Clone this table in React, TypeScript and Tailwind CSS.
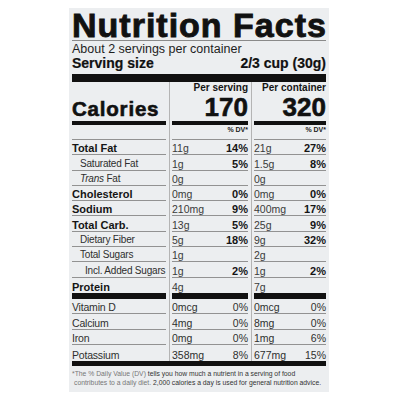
import React from "react";

type Row = {
  label: React.ReactNode;
  bold?: boolean;
  indent?: 0 | 1 | 2;
  s: string;
  sp?: string;
  c: string;
  cp?: string;
};

const rows: Row[] = [
  { label: "Total Fat", bold: true, s: "11g", sp: "14%", c: "21g", cp: "27%" },
  { label: "Saturated Fat", indent: 1, s: "1g", sp: "5%", c: "1.5g", cp: "8%" },
  {
    label: (
      <span>
        <span className="italic">Trans</span>
        {" Fat"}
      </span>
    ),
    indent: 1,
    s: "0g",
    c: "0g",
  },
  { label: "Cholesterol", bold: true, s: "0mg", sp: "0%", c: "0mg", cp: "0%" },
  { label: "Sodium", bold: true, s: "210mg", sp: "9%", c: "400mg", cp: "17%" },
  { label: "Total Carb.", bold: true, s: "13g", sp: "5%", c: "25g", cp: "9%" },
  { label: "Dietary Fiber", indent: 1, s: "5g", sp: "18%", c: "9g", cp: "32%" },
  { label: "Total Sugars", indent: 1, s: "1g", c: "2g" },
  { label: "Incl. Added Sugars", indent: 2, s: "1g", sp: "2%", c: "1g", cp: "2%" },
  { label: "Protein", bold: true, s: "4g", c: "7g" },
];

const vits = [
  ["Vitamin D", "0mcg", "0%", "0mcg", "0%"],
  ["Calcium", "4mg", "0%", "8mg", "0%"],
  ["Iron", "0mg", "0%", "1mg", "6%"],
  ["Potassium", "358mg", "8%", "677mg", "15%"],
];

const line = "border-b border-[#929292]";

function Divider() {
  return <div className="w-px self-stretch bg-[#b4b4b4]" />;
}

function NumHeader({ title, value }: { title: string; value: string }) {
  return (
    <div className={`h-[58px] flex flex-col ${line}`}>
      <div className="h-[12px] leading-[12px] text-[10px] font-bold text-right text-[#151515]">
        {title}
      </div>
      <div className="h-[26px] leading-[26px] text-[26px] font-bold text-right text-[#111] [-webkit-text-stroke:0.6px_#111]">
        {value}
      </div>
      <div className="mt-[1px] h-[4px] bg-[#111]" />
      <div className="h-[13px] leading-[10px] text-[7px] font-bold text-right text-[#222]">
        % DV*
      </div>
    </div>
  );
}

export default function App() {
  return (
    <div
      className="w-[400px] h-[400px] bg-white pt-[8px] pl-[69px]"
      style={{ fontFamily: '"Liberation Sans", Arial, sans-serif' }}
    >
      <div className="w-[260px] h-[384px] bg-[#eceef0] px-[3px] flex flex-col">
        <div className="h-[33px] border-b border-[#8a8a8a]">
          <div className="h-[32px] pt-[2px] leading-[30px] text-[34px] font-bold tracking-[1px] text-[#111] [-webkit-text-stroke:0.9px_#111] whitespace-nowrap">
            Nutrition Facts
          </div>
        </div>
        <div className="h-[15px] pt-[1px] leading-[14px] text-[12.5px] text-[#1e1e1e] whitespace-nowrap">
          About 2 servings per container
        </div>
        <div className="h-[18px] leading-[15px] text-[14px] font-bold text-[#111] flex justify-between [-webkit-text-stroke:0.2px_#111]">
          <span>Serving size</span>
          <span>2/3 cup (30g)</span>
        </div>
        <div className="h-[8px] bg-[#111]" />

        <div className="flex h-[279px]">
          {/* Column 1 */}
          <div className="w-[97px] flex flex-col pr-[3px]">
            <div className={`h-[58px] flex flex-col ${line}`}>
              <div className="h-[38px] pt-[16px] leading-[22px] text-[20.5px] font-bold tracking-[0.8px] text-[#111] [-webkit-text-stroke:0.6px_#111]">
                Calories
              </div>
              <div className="mt-[1px] h-[4px] bg-[#111]" />
            </div>
            {rows.map((r, i) => (
              <div
                key={i}
                className={`h-[15.3px] flex items-end leading-[12px] whitespace-nowrap ${
                  i < rows.length - 1 ? line : ""
                } ${
                  r.bold
                    ? "text-[11px] font-bold text-[#151515]"
                    : "text-[10px] tracking-[-0.2px] text-[#2e2e2e]"
                } ${r.indent === 1 ? "pl-[8px]" : r.indent === 2 ? "pl-[13px]" : ""}`}
              >
                {r.label}
              </div>
            ))}
            <div className="h-[6px] bg-[#111]" />
            {vits.map((v, i) => (
              <div
                key={i}
                className={`h-[15.5px] flex items-end leading-[12px] text-[10.5px] tracking-[-0.2px] text-[#2e2e2e] ${
                  i < vits.length - 1 ? line : ""
                }`}
              >
                {v[0]}
              </div>
            ))}
          </div>
          <Divider />
          {/* Column 2 */}
          <div className="w-[81px] flex flex-col pl-[2px] pr-[3px]">
            <NumHeader title="Per serving" value="170" />
            {rows.map((r, i) => (
              <div
                key={i}
                className={`h-[15.3px] flex items-end justify-between leading-[12px] ${
                  i < rows.length - 1 ? line : ""
                }`}
              >
                <span className="text-[10.5px] text-[#3a3a3a]">{r.s}</span>
                <span className="text-[11px] font-bold text-[#151515]">{r.sp ?? ""}</span>
              </div>
            ))}
            <div className="h-[6px] bg-[#111]" />
            {vits.map((v, i) => (
              <div
                key={i}
                className={`h-[15.5px] flex items-end justify-between leading-[12px] text-[10.5px] text-[#2e2e2e] ${
                  i < vits.length - 1 ? line : ""
                }`}
              >
                <span>{v[1]}</span>
                <span>{v[2]}</span>
              </div>
            ))}
          </div>
          <Divider />
          {/* Column 3 */}
          <div className="flex-1 flex flex-col pl-[2px]">
            <NumHeader title="Per container" value="320" />
            {rows.map((r, i) => (
              <div
                key={i}
                className={`h-[15.3px] flex items-end justify-between leading-[12px] ${
                  i < rows.length - 1 ? line : ""
                }`}
              >
                <span className="text-[10.5px] text-[#3a3a3a]">{r.c}</span>
                <span className="text-[11px] font-bold text-[#151515]">{r.cp ?? ""}</span>
              </div>
            ))}
            <div className="h-[6px] bg-[#111]" />
            {vits.map((v, i) => (
              <div
                key={i}
                className={`h-[15.5px] flex items-end justify-between leading-[12px] text-[10.5px] text-[#2e2e2e] ${
                  i < vits.length - 1 ? line : ""
                }`}
              >
                <span>{v[3]}</span>
                <span>{v[4]}</span>
              </div>
            ))}
          </div>
        </div>

        <div className="h-[5px] bg-[#111]" />
        <div className="pt-[3px] text-[6.8px] leading-[9px] text-[#333] whitespace-nowrap">
          <div>
            <span className="text-[#777]">*The % Daily Value (DV)</span> tells you how much a
            nutrient in a serving of food
          </div>
          <div className="pl-[2px]">
            <span className="text-[#777]">contributes to a daily diet.</span> 2,000 calories a
            day is used for general nutrition advice.
          </div>
        </div>
      </div>
    </div>
  );
}
